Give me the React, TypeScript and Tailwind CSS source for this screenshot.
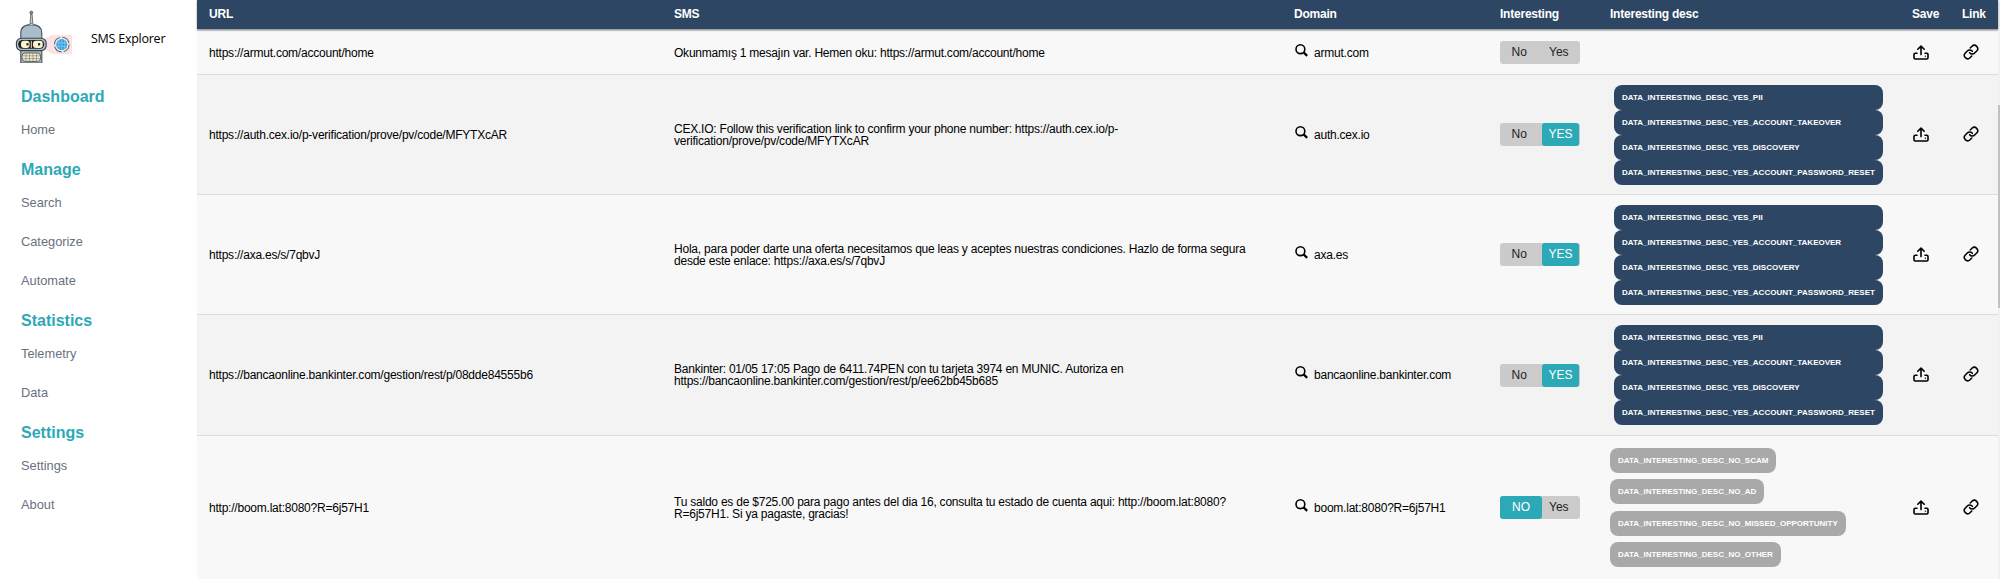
import type { ReactNode } from "react";

const YES_TAGS = [
  "DATA_INTERESTING_DESC_YES_PII",
  "DATA_INTERESTING_DESC_YES_ACCOUNT_TAKEOVER",
  "DATA_INTERESTING_DESC_YES_DISCOVERY",
  "DATA_INTERESTING_DESC_YES_ACCOUNT_PASSWORD_RESET",
];

const NO_TAGS = [
  "DATA_INTERESTING_DESC_NO_SCAM",
  "DATA_INTERESTING_DESC_NO_AD",
  "DATA_INTERESTING_DESC_NO_MISSED_OPPORTUNITY",
  "DATA_INTERESTING_DESC_NO_OTHER",
];

type Choice = "none" | "yes" | "no";

interface Message {
  url: string;
  sms: string[];
  domain: string;
  choice: Choice;
  height: string;
}

const MESSAGES: Message[] = [
  {
    url: "https://armut.com/account/home",
    sms: ["Okunmamış 1 mesajın var. Hemen oku: https://armut.com/account/home"],
    domain: "armut.com",
    choice: "none",
    height: "h-11",
  },
  {
    url: "https://auth.cex.io/p-verification/prove/pv/code/MFYTXcAR",
    sms: [
      "CEX.IO: Follow this verification link to confirm your phone number: https://auth.cex.io/p-",
      "verification/prove/pv/code/MFYTXcAR",
    ],
    domain: "auth.cex.io",
    choice: "yes",
    height: "h-30",
  },
  {
    url: "https://axa.es/s/7qbvJ",
    sms: [
      "Hola, para poder darte una oferta necesitamos que leas y aceptes nuestras condiciones. Hazlo de forma segura",
      "desde este enlace: https://axa.es/s/7qbvJ",
    ],
    domain: "axa.es",
    choice: "yes",
    height: "h-30",
  },
  {
    url: "https://bancaonline.bankinter.com/gestion/rest/p/08dde84555b6",
    sms: [
      "Bankinter: 01/05 17:05 Pago de 6411.74PEN con tu tarjeta 3974 en MUNIC. Autoriza en",
      "https://bancaonline.bankinter.com/gestion/rest/p/ee62bb45b685",
    ],
    domain: "bancaonline.bankinter.com",
    choice: "yes",
    height: "h-[121px]",
  },
  {
    url: "http://boom.lat:8080?R=6j57H1",
    sms: [
      "Tu saldo es de $725.00 para pago antes del dia 16, consulta tu estado de cuenta aqui: http://boom.lat:8080?",
      "R=6j57H1. Si ya pagaste, gracias!",
    ],
    domain: "boom.lat:8080?R=6j57H1",
    choice: "no",
    height: "h-[144px]",
  },
];

const MENU = [
  { title: "Dashboard", items: ["Home"] },
  { title: "Manage", items: ["Search", "Categorize", "Automate"] },
  { title: "Statistics", items: ["Telemetry", "Data"] },
  { title: "Settings", items: ["Settings", "About"] },
];

const COLUMNS = "grid grid-cols-[465px_620px_206px_110px_302px_50px_48px]";

function Logo() {
  return (
    <svg className="h-[53px] w-[57px]" viewBox="15 10 57 53">
      <path d="M45 38 L52 35 H72 V54 H52 L45 50Z" fill="#fbe3e5" />
      <circle cx="31.3" cy="12.6" r="1.4" fill="#8b96a0" stroke="#444" strokeWidth=".8" />
      <path d="M30.8 14 L30 25 H33 L32 14Z" fill="#c3ced6" stroke="#555" strokeWidth=".8" />
      <path d="M20.8 63 V33 C20.8 27 25 24.6 31.4 24.6 S41.8 27 41.8 33 V63Z" fill="#a9bdcb" stroke="#4a5157" strokeWidth="1.1" />
      <path d="M28 25 Q31.4 22 34.8 25" fill="#c3ced6" stroke="#555" strokeWidth=".7" />
      <rect x="16.4" y="38.2" width="29.8" height="12.4" rx="5" fill="#a9bdcb" stroke="#3c4146" strokeWidth="1.1" />
      <rect x="18.2" y="40" width="26" height="8.8" rx="4.2" fill="#24211c" />
      <rect x="21" y="40.8" width="8.6" height="7.2" rx="3" fill="#f8f4d2" />
      <rect x="33" y="40.8" width="9.8" height="7.2" rx="3" fill="#f8f4d2" />
      <path d="M31.3 40.8V48" stroke="#f8f4d2" strokeWidth=".9" />
      <rect x="26.4" y="43.2" width="2.2" height="2.2" fill="#222" />
      <rect x="38" y="43.2" width="2.2" height="2.2" fill="#222" />
      <rect x="22" y="53" width="18.6" height="8.4" rx="3.2" fill="#f2eed2" stroke="#55534c" strokeWidth=".9" />
      <path d="M22.5 55.8H40M22.5 58.6H40M26 53.4V61M29.5 53.4V61M33 53.4V61M36.5 53.4V61" stroke="#77746a" strokeWidth=".6" />
      <circle cx="61.8" cy="44.6" r="7.3" fill="#eceef3" stroke="#676b76" strokeWidth="1.1" strokeDasharray="9.5 2" />
      <circle cx="61.8" cy="44.6" r="5.5" fill="#319fdd" />
      <path d="M56.7 43H66.9M56.7 46.3H66.9M61.8 39.4V49.8M59.3 40Q58 44.6 59.3 49.2M64.3 40Q65.6 44.6 64.3 49.2" stroke="#a9d8f3" strokeWidth=".6" fill="none" />
    </svg>
  );
}

function SearchIcon() {
  return (
    <svg className="-mt-[5px] size-[13px] shrink-0" viewBox="0 0 13 13" fill="none" stroke="#000">
      <circle cx="5.4" cy="5.2" r="4.4" strokeWidth="1.6" />
      <path d="M8.6 8.4L12.2 11.9" strokeWidth="2.2" />
    </svg>
  );
}

function UploadIcon() {
  return (
    <svg className="-mt-px ml-px h-[15px] w-4" viewBox="0 0 16 15" fill="none" stroke="#000" strokeWidth="1.6" strokeLinecap="round" strokeLinejoin="round">
      <path d="M8 9.6V1.4M4.8 4.2L8 1.1L11.2 4.2" />
      <path d="M4 8.2H2.2Q1 8.2 1 9.4V12.8Q1 14 2.2 14H13.8Q15 14 15 12.8V9.4Q15 8.2 13.8 8.2H12" />
      <path d="M12.3 11.2H12.5" strokeWidth="1.2" />
    </svg>
  );
}

function LinkIcon() {
  return (
    <svg className="-mt-[2px] ml-px size-4" viewBox="0 0 24 24" fill="none" stroke="#000" strokeWidth="2.3" strokeLinecap="round" strokeLinejoin="round">
      <path d="M10 13a5 5 0 0 0 7.54.54l3-3a5 5 0 0 0-7.07-7.07l-2.6 2.6" />
      <path d="M14 11a5 5 0 0 0-7.54-.54l-3 3a5 5 0 0 0 7.07 7.07l2.6-2.6" />
    </svg>
  );
}

function Toggle({ choice }: { choice: Choice }) {
  return (
    <div className="flex h-[23px] w-20 rounded-[3px] bg-[#cbcbcb] text-[12px] leading-[22px] tracking-normal text-[#222]">
      <span className={choice === "no" ? "w-[42px] rounded-[3px] bg-[#2ca9b7] pl-3 text-white" : "w-[42px] pl-[11.5px]"}>
        {choice === "no" ? "NO" : "No"}
      </span>
      <span className={choice === "yes" ? "w-[37px] rounded-[3px] bg-[#2ca9b7] pl-[6.5px] text-white" : "w-[37px] pl-[7px]"}>
        {choice === "yes" ? "YES" : "Yes"}
      </span>
    </div>
  );
}

function Tags({ choice }: { choice: Choice }) {
  if (choice === "yes") {
    return (
      <div className="ml-1 flex w-[269px] flex-col tracking-normal">
        {YES_TAGS.map((tag) => (
          <span key={tag} className="h-[25px] rounded-lg bg-[#2d4663] pl-2 text-[8px] leading-[25px] font-bold whitespace-nowrap text-white">
            {tag}
          </span>
        ))}
      </div>
    );
  }
  if (choice === "no") {
    return (
      <div className="flex flex-col items-start gap-[6.3px] tracking-normal">
        {NO_TAGS.map((tag) => (
          <span key={tag} className="h-[25px] rounded-lg bg-[#a9a9a9] px-2 text-[8px] leading-[25px] font-bold whitespace-nowrap text-white">
            {tag}
          </span>
        ))}
      </div>
    );
  }
  return null;
}

function Cell({ children }: { children?: ReactNode }) {
  return <div className="flex items-center pl-3 whitespace-nowrap">{children}</div>;
}

export default function App() {
  return (
    <div className="flex h-[579px] w-[2000px] overflow-hidden bg-white font-['Liberation_Sans',Arial,sans-serif] text-black">
      <aside className="w-[197px] shrink-0">
        <div className="flex h-[76px] pt-[10px] pl-[15px]">
          <Logo />
          <div className="mt-[19px] ml-[19px] font-['Open_Sans','Noto_Sans',sans-serif] text-[12.5px] leading-5 tracking-[-0.25px] whitespace-nowrap">SMS Explorer</div>
        </div>
        <nav className="pl-[21px]">
          {MENU.map((group) => (
            <div key={group.title} className="pt-[11px]">
              <h2 className="h-5 text-[16px] leading-5 font-bold text-[#2ca9b7]">{group.title}</h2>
              <ul className="pt-[3px]">
                {group.items.map((item) => (
                  <li key={item} className="h-[39px] text-[12.8px] leading-[39px] text-[#69707f]">{item}</li>
                ))}
              </ul>
            </div>
          ))}
        </nav>
      </aside>
      <main className="w-[1801px] shrink-0 text-[12px] leading-3 tracking-[-0.225px]">
        <div className={`${COLUMNS} relative h-[29px] bg-[#2d4663] pb-[2px] font-bold text-white shadow-[0_1px_2px_rgba(0,0,0,0.4)]`}>
          {["URL", "SMS", "Domain", "Interesting", "Interesting desc", "Save", "Link"].map((name) => (
            <Cell key={name}>{name}</Cell>
          ))}
        </div>
        <div className="h-[2px] bg-[#ddd]" />
        {MESSAGES.map((message, index) => (
          <div key={message.url} className={`${COLUMNS} ${message.height} border-b border-[#dcdcdc] ${index % 2 ? "bg-[#f3f3f3]" : "bg-[#f8f8f8]"}`}>
            <Cell>{message.url}</Cell>
            <Cell>
              <div>
                {message.sms.map((line) => (
                  <div key={line}>{line}</div>
                ))}
              </div>
            </Cell>
            <Cell>
              <div className="flex items-center gap-[6px] pl-px">
                <SearchIcon />
                {message.domain}
              </div>
            </Cell>
            <Cell>
              <Toggle choice={message.choice} />
            </Cell>
            <Cell>
              <Tags choice={message.choice} />
            </Cell>
            <Cell>
              <UploadIcon />
            </Cell>
            <Cell>
              <LinkIcon />
            </Cell>
          </div>
        ))}
      </main>
      <div className="w-[2px] shrink-0 bg-[#f1f1f1] pt-[105px]">
        <div className="h-[203px] bg-[#c1c1c1]" />
      </div>
    </div>
  );
}
